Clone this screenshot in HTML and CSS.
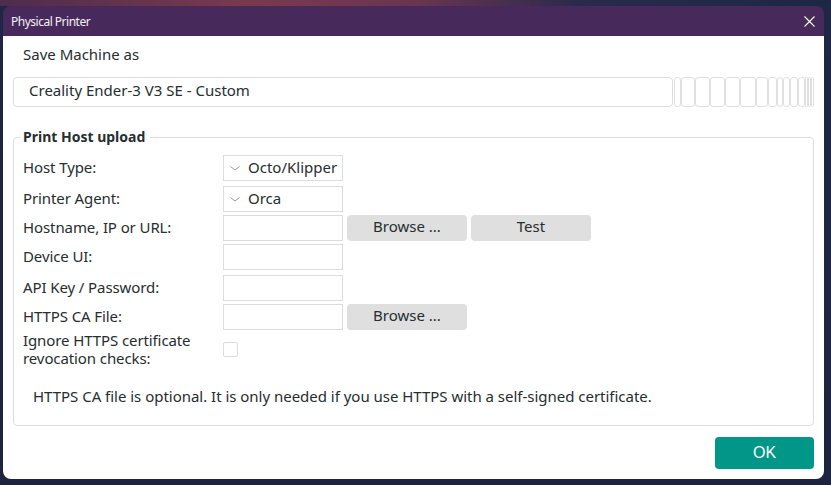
FILE: index.html
```html
<!DOCTYPE html>
<html lang="en">
<head>
<meta charset="utf-8">
<title>Physical Printer</title>
<link rel="stylesheet" href="styles.css">
</head>
<body>
<div class="window">
  <div class="titlebar">
    <span class="title">Physical Printer</span>
    <span class="close" aria-label="Close">
      <svg width="11" height="11" viewBox="0 0 11 11"><path d="M0.5 0.5 L10.5 10.5 M10.5 0.5 L0.5 10.5" stroke="#fff" stroke-width="1.1" fill="none"/></svg>
    </span>
  </div>
  <div class="content">
    <div class="caption">Save Machine as</div>
    <div class="name-row">
      <div class="name-input">Creality Ender-3 V3 SE - Custom</div>
      <div class="trail">
        <span class="t7"></span><span class="t14"></span><span class="t15"></span><span class="t15"></span><span class="t15"></span><span class="t16"></span><span class="t12"></span><span class="t9"></span><span class="t6"></span><span class="t7"></span><span class="t8"></span><span class="t7"></span><span class="t3"></span><span class="t3"></span><span class="t3"></span>
      </div>
    </div>

    <fieldset class="group">
      <legend>Print Host upload</legend>
      <div class="rows">
        <div class="row gap-lg">
          <span class="label">Host Type:</span>
          <div class="combo"><svg class="chev" width="10" height="5" viewBox="0 0 10 5"><path d="M0.5 0.5 L5 4 L9.5 0.5" stroke="#9a9a9a" stroke-width="1" fill="none"/></svg><span>Octo/Klipper</span></div>
        </div>
        <div class="row">
          <span class="label">Printer Agent:</span>
          <div class="combo"><svg class="chev" width="10" height="5" viewBox="0 0 10 5"><path d="M0.5 0.5 L5 4 L9.5 0.5" stroke="#9a9a9a" stroke-width="1" fill="none"/></svg><span>Orca</span></div>
        </div>
        <div class="row">
          <span class="label">Hostname, IP or URL:</span>
          <div class="field"></div>
          <span class="btn">Browse ...</span>
          <span class="btn">Test</span>
        </div>
        <div class="row gap-lg">
          <span class="label">Device UI:</span>
          <div class="field"></div>
        </div>
        <div class="row">
          <span class="label">API Key / Password:</span>
          <div class="field"></div>
        </div>
        <div class="row gap-sm">
          <span class="label">HTTPS CA File:</span>
          <div class="field"></div>
          <span class="btn">Browse ...</span>
        </div>
        <div class="row tall">
          <span class="label multi"><span class="line">Ignore HTTPS certificate</span><span class="line">revocation checks:</span></span>
          <span class="check"></span>
        </div>
      </div>
      <p class="note">HTTPS CA file is optional. It is only needed if you use HTTPS with a self-signed certificate.</p>
    </fieldset>

    <div class="footer">
      <span class="ok">OK</span>
    </div>
  </div>
</div>
</body>
</html>
```

FILE: styles.css
```css
html, body {
  margin: 0;
  height: 100%;
}

body {
  background:
    linear-gradient(90deg, #4d2d4c 0%, #7a3a4e 30%, #6a3550 50%, #2a2a4c 70%, #1c2746 100%) top / 100% 6px no-repeat,
    linear-gradient(180deg, #1f2744 0%, #1e2340 100%);
  font-family: "Noto Sans", "Open Sans", sans-serif;
  color: #262e30;
  overflow: hidden;
}

.window {
  margin: 6px 0 0 3px;
  width: 821px;
  height: 473px;
  display: flex;
  flex-direction: column;
  border-radius: 8px;
  overflow: hidden;
}

/* title bar */
.titlebar {
  height: 30px;
  flex: none;
  background: #472a5b;
  display: flex;
  align-items: center;
  justify-content: space-between;
  padding: 0 9px 0 8px;
}

.title {
  color: #f4f0f6;
  font-size: 12px;
  letter-spacing: -0.5px;
}

.close {
  display: flex;
  width: 11px;
  height: 11px;
  margin-top: 1px;
}

/* dialog body */
.content {
  flex: 1;
  background: #fff;
  padding: 0 10px 10px;
  display: flex;
  flex-direction: column;
}

.caption {
  font-size: 15px;
  line-height: 20px;
  margin: 8px 0 2px 10px;
}

.name-row {
  display: flex;
  margin-top: 11px;
  height: 30px;
}

.name-input {
  width: 660px;
  box-sizing: border-box;
  border: 1px solid #dcdcdc;
  border-radius: 4px;
  font-size: 15px;
  line-height: 25px;
  padding: 0 0 3px 15px;
}

.trail {
  display: flex;
  margin-left: 1px;
}

.trail span {
  box-sizing: border-box;
  border: 1px solid #e0e0e0;
  border-radius: 3px;
  height: 30px;
}

.t3 { width: 3px; }
.t6 { width: 6px; }
.t7 { width: 7px; }
.t8 { width: 8px; }
.t9 { width: 9px; }
.t12 { width: 12px; }
.t14 { width: 14px; }
.t15 { width: 15px; }
.t16 { width: 16px; }

/* Print Host upload group */
.group {
  margin: 20px 0 0;
  padding: 0 0 19px;
  border: 1px solid #dcdcdc;
  border-radius: 4px;
  min-width: 0;
}

.group legend {
  margin-left: 6px;
  padding: 0 5px 0 3px;
  font-size: 14px;
  font-weight: 700;
  line-height: 20px;
}

.rows {
  display: flex;
  flex-direction: column;
  padding: 8px 0 0 9px;
}

.row {
  display: flex;
  align-items: center;
  height: 26px;
  margin-bottom: 3px;
  gap: 4px;
}

.row.gap-lg { margin-bottom: 5px; }
.row.gap-sm { margin-bottom: 1px; }
.row.tall { height: 36px; margin-bottom: 0; }

.label {
  width: 200px;
  flex: none;
  margin-right: -4px;
  font-size: 15px;
  line-height: 20px;
  padding-bottom: 3px;
  letter-spacing: -0.1px;
}

.label.multi {
  display: flex;
  flex-direction: column;
  padding-bottom: 1px;
}

.label.multi .line {
  height: 18px;
  line-height: 18px;
}

.combo,
.field {
  width: 120px;
  height: 26px;
  box-sizing: border-box;
  border: 1px solid #dcdcdc;
  flex: none;
}

.combo {
  display: flex;
  align-items: center;
  font-size: 15px;
  line-height: 20px;
  padding: 0 0 2px 6px;
}

.chev {
  margin: 3px 8px 0 0;
}

.btn {
  width: 120px;
  height: 26px;
  flex: none;
  background: #dfdfdf;
  border-radius: 4px;
  font-size: 15px;
  line-height: 23px;
  text-align: center;
}

.check {
  width: 15px;
  height: 15px;
  box-sizing: border-box;
  border: 1px solid #dcdcdc;
  border-radius: 2px;
}

.note {
  margin: 19px 0 0 19px;
  font-size: 15px;
  line-height: 20px;
  letter-spacing: -0.02px;
}

/* footer */
.footer {
  margin-top: auto;
  display: flex;
  justify-content: flex-end;
}

.ok {
  width: 99px;
  height: 32px;
  background: #009688;
  border-radius: 4px;
  color: #fff;
  font-family: "Liberation Sans", Arial, sans-serif;
  font-size: 16px;
  line-height: 32px;
  text-align: center;
}
```
